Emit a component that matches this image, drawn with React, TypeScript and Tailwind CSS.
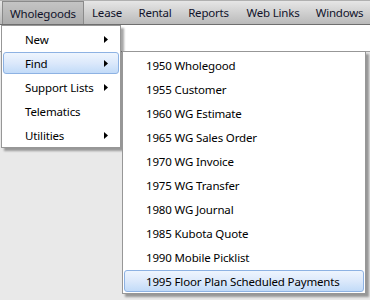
import React from 'react';

const font = { fontFamily: '"Noto Sans", "Open Sans", sans-serif' };

const topItems = [
  { label: 'Wholegoods', w: 'w-[82px]', active: true },
  { label: 'Lease', w: 'w-[46px]' },
  { label: 'Rental', w: 'w-[50px]' },
  { label: 'Reports', w: 'w-[57px]' },
  { label: 'Web Links', w: 'w-[72px]' },
  { label: 'Windows', w: 'w-[61px]' },
];

const mainItems = [
  { label: 'New', sub: true },
  { label: 'Find', sub: true, active: true },
  { label: 'Support Lists', sub: true },
  { label: 'Telematics' },
  { label: 'Utilities', sub: true },
];

const findItems = [
  '1950 Wholegood',
  '1955 Customer',
  '1960 WG Estimate',
  '1965 WG Sales Order',
  '1970 WG Invoice',
  '1975 WG Transfer',
  '1980 WG Journal',
  '1985 Kubota Quote',
  '1990 Mobile Picklist',
  '1995 Floor Plan Scheduled Payments',
];

const Arrow = () => (
  <svg width="4" height="7" viewBox="0 0 4 7" className="shrink-0">
    <polygon points="0,0 4,3.5 0,7" fill="#000" />
  </svg>
);

const MenuRow = ({ label, sub, active }: { label: string; sub?: boolean; active?: boolean }) => (
  <div className="h-[24px] py-[1px]">
    <div
      className={`h-[22px] flex items-center pl-[21px] pr-[10px] rounded-[3px] border ${
        active
          ? 'border-[#8db2e3] bg-gradient-to-b from-[#eef5fe] via-[#dce9fb] to-[#c2dbf8]'
          : 'border-transparent'
      }`}
    >
      <span className="flex-1 text-[11.5px] tracking-[-0.15px] text-black whitespace-nowrap leading-none pt-[1px]">
        {label}
      </span>
      {sub && <Arrow />}
    </div>
  </div>
);

export default function App() {
  return (
    <div className="relative w-[370px] h-[300px] bg-[#e9e9e9] overflow-hidden" style={font}>
      <div className="h-[25px] flex border-t border-[#b0b0b0] border-b border-b-[#6e6e6e] bg-gradient-to-b from-[#e6e6e6] to-[#bababa] pl-[2px]">
        {topItems.map((t) => (
          <div
            key={t.label}
            className={`${t.w} h-full flex items-center justify-center pt-[1px] text-[11.5px] tracking-[-0.2px] text-[#10122a] whitespace-nowrap ${
              t.active ? 'bg-gradient-to-b from-[#c4c4c4] to-[#acacac] border border-[#8a8a8a] border-b-0' : ''
            }`}
          >
            {t.label}
          </div>
        ))}
      </div>
      <div className="h-[27px] bg-white border-b border-[#a0a0a0]" />

      <div className="absolute left-[1px] top-[25px] w-[120px] bg-white border border-[#979797] pt-[1px] px-[1px] shadow-[3px_3px_2px_rgba(0,0,0,0.35)]">
        {mainItems.map((m) => (
          <MenuRow key={m.label} label={m.label} sub={m.sub} active={m.active} />
        ))}
      </div>

      <div className="absolute left-[122px] top-[51px] w-[244px] bg-white border border-[#979797] pt-[1px] px-[1px] shadow-[3px_3px_2px_rgba(0,0,0,0.35)]">
        {findItems.map((f, i) => (
          <MenuRow key={f} label={f} active={i === findItems.length - 1} />
        ))}
      </div>
    </div>
  );
}
